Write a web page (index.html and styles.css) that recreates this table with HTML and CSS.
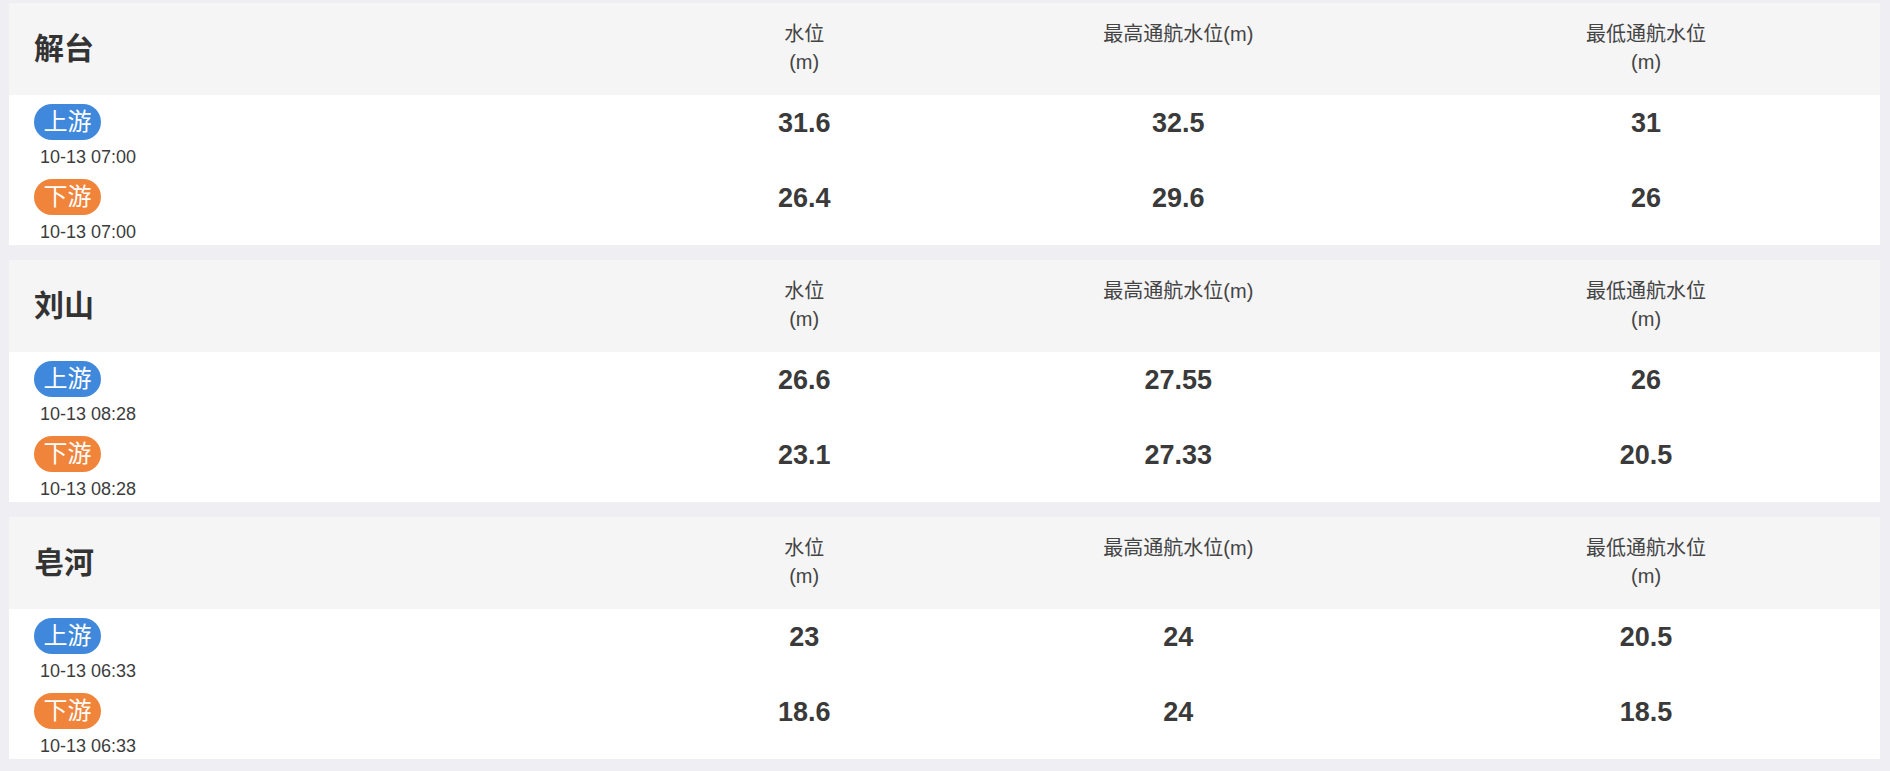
FILE: index.html
```html
<!DOCTYPE html>
<html lang="zh-CN">
<head>
<meta charset="utf-8">
<title>水位</title>
<link rel="stylesheet" href="styles.css">
</head>
<body>
<div class="list">
  <section class="card">
    <div class="card-head">
      <div class="name">解台</div>
      <div class="col-label">水位<br>(m)</div>
      <div class="col-label">最高通航水位(m)</div>
      <div class="col-label">最低通航水位<br>(m)</div>
    </div>
    <div class="row">
      <div class="site"><span class="badge up">上游</span><span class="time">10-13 07:00</span></div>
      <div class="val">31.6</div>
      <div class="val">32.5</div>
      <div class="val">31</div>
    </div>
    <div class="row">
      <div class="site"><span class="badge down">下游</span><span class="time">10-13 07:00</span></div>
      <div class="val">26.4</div>
      <div class="val">29.6</div>
      <div class="val">26</div>
    </div>
  </section>
  <section class="card">
    <div class="card-head">
      <div class="name">刘山</div>
      <div class="col-label">水位<br>(m)</div>
      <div class="col-label">最高通航水位(m)</div>
      <div class="col-label">最低通航水位<br>(m)</div>
    </div>
    <div class="row">
      <div class="site"><span class="badge up">上游</span><span class="time">10-13 08:28</span></div>
      <div class="val">26.6</div>
      <div class="val">27.55</div>
      <div class="val">26</div>
    </div>
    <div class="row">
      <div class="site"><span class="badge down">下游</span><span class="time">10-13 08:28</span></div>
      <div class="val">23.1</div>
      <div class="val">27.33</div>
      <div class="val">20.5</div>
    </div>
  </section>
  <section class="card">
    <div class="card-head">
      <div class="name">皂河</div>
      <div class="col-label">水位<br>(m)</div>
      <div class="col-label">最高通航水位(m)</div>
      <div class="col-label">最低通航水位<br>(m)</div>
    </div>
    <div class="row">
      <div class="site"><span class="badge up">上游</span><span class="time">10-13 06:33</span></div>
      <div class="val">23</div>
      <div class="val">24</div>
      <div class="val">20.5</div>
    </div>
    <div class="row">
      <div class="site"><span class="badge down">下游</span><span class="time">10-13 06:33</span></div>
      <div class="val">18.6</div>
      <div class="val">24</div>
      <div class="val">18.5</div>
    </div>
  </section>
</div>
</body>
</html>
```
FILE: styles.css
```css
html, body {
  margin: 0;
  padding: 0;
}
body {
  background: #eeeef3;
  color: #333;
  font-family: "Liberation Sans", Arial, "Noto Sans CJK SC", sans-serif;
}
.list {
  display: flex;
  flex-direction: column;
  gap: 15px;
  padding: 3px 10px 10px 9px;
}
.card {
  background: #fff;
}
.card-head,
.row {
  display: grid;
  grid-template-columns: 35% 15% 25% 25%;
}
.card-head {
  background: #f5f5f6;
  height: 92px;
}
.name {
  align-self: center;
  padding: 0 0 7px 25px;
  font-size: 30px;
  font-weight: 700;
  color: #333;
}
.col-label {
  text-align: center;
  padding-top: 17px;
  font-size: 20px;
  line-height: 28px;
  color: #444;
}
.row {
  height: 75px;
  box-sizing: border-box;
  padding-top: 9px;
}
.site {
  display: flex;
  flex-direction: column;
  align-items: flex-start;
  padding-left: 25px;
}
.badge {
  height: 36px;
  line-height: 36px;
  padding: 0 9.5px;
  border-radius: 18px;
  color: #fff;
  font-size: 24px;
}
.badge.up {
  background: #3f88db;
}
.badge.down {
  background: #f0843b;
}
.time {
  margin-top: 5px;
  margin-left: 6px;
  font-size: 18px;
  line-height: 24px;
  color: #3c3c3c;
}
.val {
  text-align: center;
  padding-top: 1px;
  font-size: 27px;
  font-weight: 700;
  line-height: 36px;
  color: #3a3a3a;
}
```
